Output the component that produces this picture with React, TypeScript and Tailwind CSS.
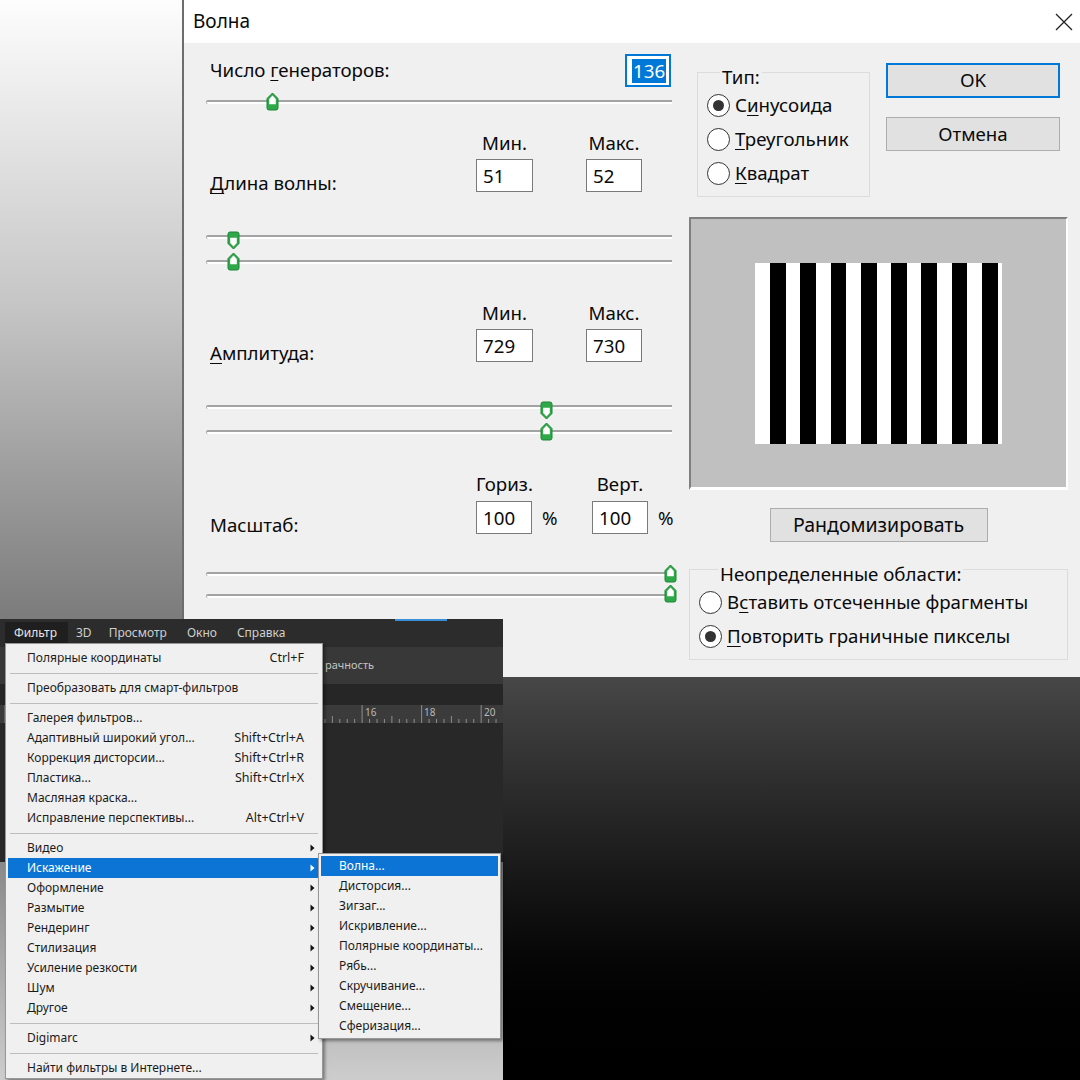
import React from "react";
import clsx from "clsx";

const Thumb = ({ down = false }: { down?: boolean }) => (
  <svg width="13" height="19" viewBox="0 0 13 19" className={down ? "rotate-180" : undefined}>
    <path d="M6.5 1 L12 6.5 V16 Q12 18 10 18 H3 Q1 18 1 16 V6.5 Z" fill="#2fa84a" stroke="#1f8535" />
    <path d="M6.5 3.6 L9.8 7 V12.2 H3.2 V7 Z" fill="#ffffff" />
  </svg>
);

const Track = () => (
  <div className="h-[4px] w-full rounded-l-[3px] border-t-2 border-l border-[#a3a3a3] bg-white" />
);

type DualSliderProps = {
  className: string;
  thumbX: string;
  lowerY: string;
  upperDown?: boolean;
};

const DualSlider = ({ className, thumbX, lowerY, upperDown }: DualSliderProps) => (
  <div className={clsx("relative flex h-[40px] w-[466px] flex-col", className)}>
    <Track />
    <Track />
    <div className={clsx("absolute top-0", thumbX)}>
      <Thumb down={upperDown} />
    </div>
    <div className={clsx("absolute", thumbX, lowerY)}>
      <Thumb />
    </div>
  </div>
);

const Field = ({ value, className }: { value: string; className?: string }) => (
  <div className={clsx("flex h-[33px] items-center border border-[#7a7a7a] bg-white pl-[6px]", className)}>
    {value}
  </div>
);

const Radio = ({ checked = false, children }: { checked?: boolean; children: React.ReactNode }) => (
  <div className="flex h-[34px] items-center gap-[5px]">
    <span className="flex h-[23px] w-[23px] items-center justify-center rounded-full border-[1.5px] border-[#333] bg-white">
      {checked && <span className="h-[11px] w-[11px] rounded-full bg-[#333]" />}
    </span>
    <span>{children}</span>
  </div>
);

const U = ({ children }: { children: React.ReactNode }) => (
  <span className="underline decoration-1 underline-offset-[3px]">{children}</span>
);

type MenuRow = { label: string; shortcut?: string; sub?: boolean; active?: boolean } | "sep";

const FILTER_MENU: MenuRow[] = [
  { label: "Полярные координаты", shortcut: "Ctrl+F" },
  "sep",
  { label: "Преобразовать для смарт-фильтров" },
  "sep",
  { label: "Галерея фильтров..." },
  { label: "Адаптивный широкий угол...", shortcut: "Shift+Ctrl+A" },
  { label: "Коррекция дисторсии...", shortcut: "Shift+Ctrl+R" },
  { label: "Пластика...", shortcut: "Shift+Ctrl+X" },
  { label: "Масляная краска..." },
  { label: "Исправление перспективы...", shortcut: "Alt+Ctrl+V" },
  "sep",
  { label: "Видео", sub: true },
  { label: "Искажение", sub: true, active: true },
  { label: "Оформление", sub: true },
  { label: "Размытие", sub: true },
  { label: "Рендеринг", sub: true },
  { label: "Стилизация", sub: true },
  { label: "Усиление резкости", sub: true },
  { label: "Шум", sub: true },
  { label: "Другое", sub: true },
  "sep",
  { label: "Digimarc", sub: true },
  "sep",
  { label: "Найти фильтры в Интернете..." },
];

const DISTORT_MENU = [
  "Волна...",
  "Дисторсия...",
  "Зигзаг...",
  "Искривление...",
  "Полярные координаты...",
  "Рябь...",
  "Скручивание...",
  "Смещение...",
  "Сферизация...",
];

const SubArrow = ({ light }: { light?: boolean }) => (
  <svg width="5" height="8" viewBox="0 0 5 8">
    <path d="M0.5 0.5 L4.5 4 L0.5 7.5 Z" fill={light ? "#ffffff" : "#111111"} />
  </svg>
);

const Ruler = () => (
  <svg width="503" height="18" viewBox="0 0 503 18" className="block">
    <rect width="503" height="18" fill="#3b3b3b" />
    {Array.from({ length: 68 }).map((_, i) => {
      const x = 5 + i * 7.44;
      const major = i % 8 === 0;
      return (
        <line key={i} x1={x} x2={x} y1={major ? 0 : i % 4 === 0 ? 11 : 14} y2={18} stroke="#8d8d8d" strokeWidth="1" />
      );
    })}
    <text x="365" y="11" fill="#b9b9b9" fontSize="10" fontFamily="Noto Sans, sans-serif">16</text>
    <text x="424" y="11" fill="#b9b9b9" fontSize="10" fontFamily="Noto Sans, sans-serif">18</text>
    <text x="484" y="11" fill="#b9b9b9" fontSize="10" fontFamily="Noto Sans, sans-serif">20</text>
  </svg>
);

const WaveDialog = () => (
  <div className="absolute left-[182px] top-0 flex h-[677px] w-[898px] flex-col border-l-2 border-[#6d6d6d] text-[18.7px] text-[#0a0a0a]">
    <div className="flex h-[43px] items-center justify-between bg-white pl-[9px] pr-[7px]">
      <span className="text-[19px]">Волна</span>
      <svg width="18" height="18" viewBox="0 0 18 18">
        <path d="M1 1 L17 17 M17 1 L1 17" stroke="#222" strokeWidth="1.3" />
      </svg>
    </div>
    <div className="flex flex-1 bg-[#f0f0f0] pl-[22px]">
      {/* left column: generators, wavelength, amplitude, scale */}
      <div className="flex w-[471px] flex-col pt-[11px]">
        <div className="flex h-[33px] items-center justify-between pr-[6px]">
          <span className="pl-[4px]">
            Число <U>г</U>енераторов:
          </span>
          <div className="flex h-[33px] w-[46px] items-center border-2 border-[#0078d7] bg-white pl-[5px]">
            <span className="bg-[#0078d7] px-[1px] leading-[24px] text-white">136</span>
          </div>
        </div>
        <div className="relative mt-[5px] flex h-[20px] w-[466px] items-center">
          <Track />
          <div className="absolute left-[60px] top-0">
            <Thumb />
          </div>
        </div>

        <div className="mt-[20px] grid grid-cols-[270px_57px_53px_56px] gap-y-[5px] leading-[22px]">
          <span />
          <span className="text-center">Мин.</span>
          <span />
          <span className="text-center">Макс.</span>
          <span className="translate-y-[2px] self-end pl-[4px]">
            <U>Д</U>лина волны:
          </span>
          <Field value="51" />
          <span />
          <Field value="52" />
        </div>
        <DualSlider className="mt-[39px] gap-[21px] pt-[4px]" thumbX="left-[21px]" lowerY="top-[21px]" upperDown />

        <div className="mt-[31px] grid grid-cols-[270px_57px_53px_56px] gap-y-[5px] leading-[22px]">
          <span />
          <span className="text-center">Мин.</span>
          <span />
          <span className="text-center">Макс.</span>
          <span className="translate-y-[2px] self-end pl-[4px]">
            <U>А</U>мплитуда:
          </span>
          <Field value="729" />
          <span />
          <Field value="730" />
        </div>
        <DualSlider className="mt-[39px] gap-[21px] pt-[4px]" thumbX="left-[334px]" lowerY="top-[21px]" upperDown />

        <div className="mt-[32px] grid grid-cols-[270px_56px_60px_56px_auto] gap-y-[6px] leading-[22px]">
          <span />
          <span className="text-center">Гориз.</span>
          <span />
          <span className="text-center">Верт.</span>
          <span />
          <span className="translate-y-[2px] self-end pl-[4px]">Масштаб:</span>
          <Field value="100" />
          <span className="self-center pl-[10px]">%</span>
          <Field value="100" />
          <span className="self-center pl-[10px]">%</span>
        </div>
        <DualSlider className="mt-[30px] gap-[18px] pt-[8px]" thumbX="left-[458px]" lowerY="top-[20px]" />
      </div>

      {/* right column: type, buttons, preview, undefined areas */}
      <div className="ml-[12px] flex w-[379px] flex-col">
        <div className="flex">
          <fieldset className="ml-[8px] mt-[13px] h-[141px] w-[173px] border border-[#dcdcdc] pl-[9px]">
            <legend className="ml-[13px] px-[2px] pt-[10px] leading-[22px]">Тип:</legend>
            <Radio checked>
              С<U>и</U>нусоида
            </Radio>
            <Radio>
              <U>Т</U>реугольник
            </Radio>
            <Radio>
              <U>К</U>вадрат
            </Radio>
          </fieldset>
          <div className="ml-[16px] flex w-[174px] flex-col pt-[20px]">
            <button className="h-[35px] border-2 border-[#0078d7] bg-[#e1e1e1]">OK</button>
            <button className="mt-[19px] h-[34px] border border-[#adadad] bg-[#e1e1e1]">Отмена</button>
          </div>
        </div>

        <div className="mt-[20px] flex h-[273px] items-center justify-center border-2 border-b-[3px] border-[#808080] border-b-white border-r-white bg-[#c0c0c0]">
          <div className="flex h-[181px] w-[247px] gap-[14.6px] bg-white pl-[15px]">
            {Array.from({ length: 8 }).map((_, i) => (
              <div key={i} className="h-full w-[15.7px] bg-black" />
            ))}
          </div>
        </div>

        <button className="mt-[18px] h-[34px] w-[218px] self-center border border-[#adadad] bg-[#e1e1e1] text-[19.5px]">
          Рандомизировать
        </button>

        <fieldset className="mt-[11px] h-[107px] w-[379px] border border-[#dcdcdc] pl-[9px]">
          <legend className="ml-[19px] px-[2px] pt-[10px] leading-[22px]">Неопределенные области:</legend>
          <Radio>
            В<U>с</U>тавить отсеченные фрагменты
          </Radio>
          <Radio checked>
            <U>П</U>овторить граничные пикселы
          </Radio>
        </fieldset>
      </div>
    </div>
  </div>
);

const PhotoshopBackdrop = () => (
  <div className="absolute left-0 top-[619px] flex h-[243px] w-[503px] flex-col bg-[#282828] text-[12px]">
    <div className="relative flex h-[28px] items-center gap-[2px] bg-[#2c2c2c] pl-[5px] text-[#cfcfcf]">
      <span className="flex h-[23px] items-center bg-[#1f1f1f] pl-[9px] pr-[11px] text-[#e6e6e6]">Фильтр</span>
      <span className="px-[6px]">3D</span>
      <span className="px-[9px]">Просмотр</span>
      <span className="px-[9px]">Окно</span>
      <span className="px-[9px]">Справка</span>
      <div className="absolute left-[395px] top-0 h-[2px] w-[52px] bg-[#3b8fd8]" />
    </div>
    <div className="flex h-[37px] items-center bg-[#383838] pl-[325px] text-[11px] text-[#c4c4c4]">рачность</div>
    <div className="h-[21px] bg-[#262626]" />
    <Ruler />
  </div>
);

const FilterMenu = () => (
  <div className="absolute left-[5px] top-[643px] w-[318px] border border-[#979797] bg-[#f0f0f0] pt-[4px] text-[12px] text-[#1b1b1b] shadow-[2px_2px_3px_rgba(0,0,0,0.4)]">
    {FILTER_MENU.map((row, i) =>
      row === "sep" ? (
        <div key={i} className="flex h-[10px] items-center px-[4px]">
          <div className="h-px w-full bg-[#bdbdbd]" />
        </div>
      ) : (
        <div
          key={i}
          className={clsx(
            "mx-[2px] flex h-[20px] items-center pl-[19px]",
            row.sub ? "pr-[5px]" : "pr-[16px]",
            row.active && "bg-[#0c74d5] text-white",
          )}
        >
          <span className="flex-1">{row.label}</span>
          {row.shortcut && <span className="text-[12.5px]">{row.shortcut}</span>}
          {row.sub && <SubArrow light={row.active} />}
        </div>
      ),
    )}
  </div>
);

const DistortMenu = () => (
  <div className="absolute left-[318px] top-[853px] w-[183px] border border-[#979797] bg-[#f0f0f0] py-[2px] text-[12px] text-[#1b1b1b] shadow-[2px_2px_3px_rgba(0,0,0,0.4)]">
    {DISTORT_MENU.map((label, i) => (
      <div key={label} className={clsx("mx-[2px] flex h-[20px] items-center pl-[18px]", i === 0 && "bg-[#0c74d5] text-white")}>
        {label}
      </div>
    ))}
  </div>
);

export default function App() {
  return (
    <div className="relative h-[1080px] w-[1080px] overflow-hidden bg-[linear-gradient(180deg,#fdfdfd_0%,#c6c6c6_28%,#7c7c7c_57%,#8a8a8a_80%,#cdcdcd_100%)] font-['Noto_Sans',sans-serif]">
      <div className="absolute bottom-0 left-[503px] right-0 top-[677px] bg-linear-to-b from-[#474747] via-[#1c1c1c] via-45% to-black" />
      <WaveDialog />
      <PhotoshopBackdrop />
      <FilterMenu />
      <DistortMenu />
    </div>
  );
}
